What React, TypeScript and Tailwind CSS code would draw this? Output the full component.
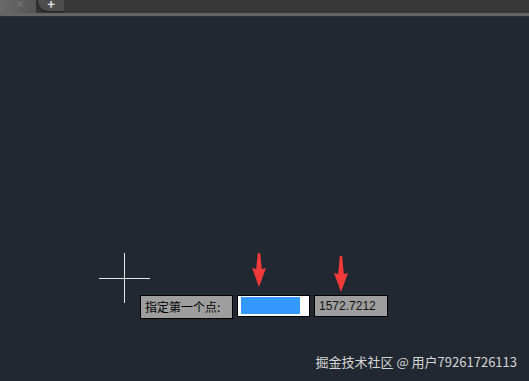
import React from "react";

function Arrow({ h }: { h: number }) {
  return (
    <svg width="16" height={h} viewBox={`0 0 16 ${h}`}>
      <path
        d={`M6.8 0 L9.2 0 L10.8 ${h - 18} L15 ${h - 19} L8 ${h} L1 ${h - 19} L5.2 ${h - 18} Z`}
        fill="#f03a3a"
      />
    </svg>
  );
}

export default function App() {
  return (
    <div
      className="w-[529px] h-[381px] flex flex-col overflow-hidden bg-[#222831]"
      style={{ fontFamily: '"Noto Sans CJK SC", "Noto Sans", sans-serif' }}
    >
      {/* tab bar */}
      <div className="h-[13px] flex bg-[#363636] relative">
        <div className="w-[36px] h-full bg-gradient-to-r from-[#6a6a6a] to-[#555555] flex items-start justify-center pl-[4px]">
          <span className="text-[10px] leading-[8px] text-[#7a7a7a]">×</span>
        </div>
        <div className="w-[28px] h-full bg-[#4d4d4d] rounded-bl-[12px] border-l-2 border-b-2 border-[#2a2a2a] flex items-start justify-center">
          <span className="text-[13px] leading-[8px] font-bold text-[#e0e0e0]">+</span>
        </div>
        <div className="flex-1 bg-[#383838]" />
      </div>
      <div className="h-[3px] bg-[#646469]" />
      <div className="h-[1px] bg-[#2b3139]" />
      {/* canvas */}
      <div className="flex-1 relative">
        {/* crosshair */}
        <div className="absolute left-[124px] top-[236px] w-[1px] h-[50px] bg-[#e8e8e8]" />
        <div className="absolute left-[99px] top-[261px] w-[51px] h-[1px] bg-[#e8e8e8]" />
        {/* arrows */}
        <div className="absolute left-[251px] top-[236px]">
          <Arrow h={34} />
        </div>
        <div className="absolute left-[333px] top-[239px]">
          <Arrow h={36} />
        </div>
        {/* prompt */}
        <div className="absolute left-[140px] top-[278px] flex items-start gap-[4px]">
          <div className="w-[93px] h-[24px] bg-[#9e9e9e] border border-black flex items-center pl-[4px] text-[12px] text-black leading-none">
            指定第一个点:
          </div>
          <div className="w-[73px] h-[22px] bg-white border border-black pl-[3px] pt-[1px]">
            <div className="w-[59px] h-[17px] bg-[#3399ff]" />
          </div>
          <div
            className="w-[74px] h-[22px] bg-[#9e9e9e] border border-black flex items-center pl-[4px] text-[12px] text-[#111] leading-none"
            style={{ fontFamily: '"Liberation Sans", "Noto Sans", sans-serif' }}
          >
            1572.7212
          </div>
        </div>
        {/* watermark */}
        <div className="absolute right-[12px] bottom-[13px] text-[13px] leading-none text-[#d6d6d6]">
          掘金技术社区 @ 用户79261726113
        </div>
      </div>
    </div>
  );
}
